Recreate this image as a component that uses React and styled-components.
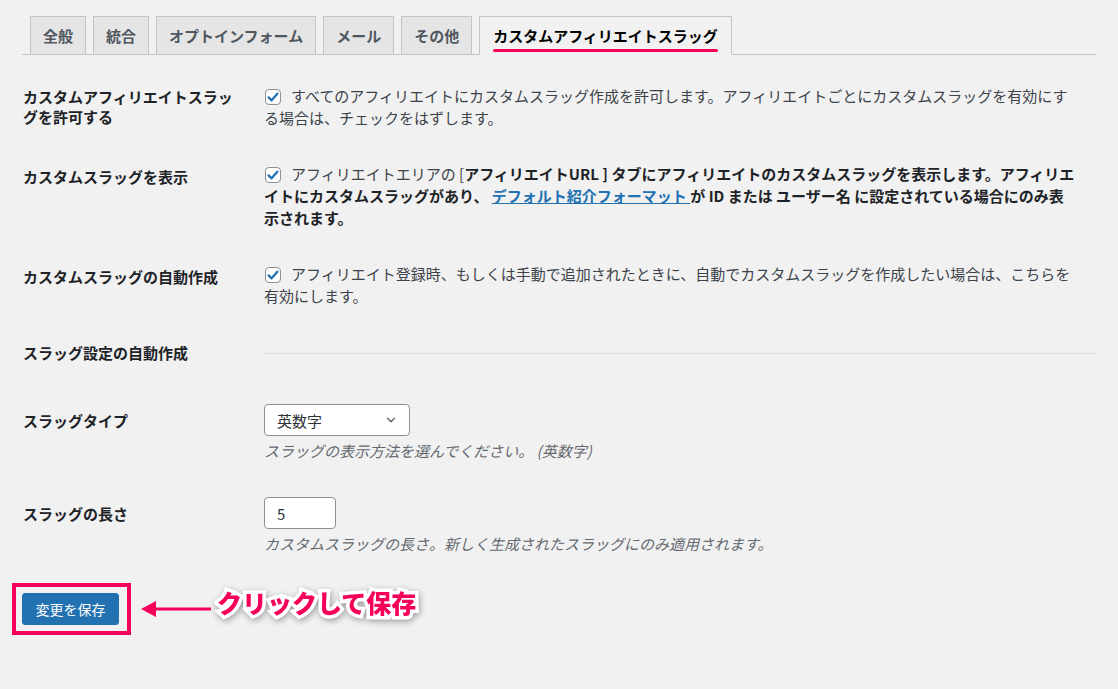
import React from 'react';
import styled, { createGlobalStyle } from 'styled-components';
import { ChevronDown } from 'lucide-react';

const GlobalStyle = createGlobalStyle`
  html, body {
    margin: 0;
    background: #f1f1f1;
  }
  body {
    font-family: "Noto Sans CJK JP", "Noto Sans", sans-serif;
    font-size: 15px;
    color: #3c434a;
  }
`;

const Wrap = styled.div`
  padding: 16px 22px 40px;
`;

const TabBar = styled.nav`
  display: flex;
  gap: 7px;
  padding-left: 8px;
  border-bottom: 1px solid #c3c4c7;
`;

const Tab = styled.div`
  position: relative;
  box-sizing: border-box;
  height: 39px;
  margin-bottom: -1px;
  display: flex;
  align-items: center;
  padding: 0 12px;
  border: 1px solid #c3c4c7;
  border-bottom-color: ${p => (p.$active ? '#f1f1f1' : '#c3c4c7')};
  background: ${p => (p.$active ? '#f1f1f1' : '#e5e5e5')};
  color: ${p => (p.$active ? '#000' : '#50575e')};
  font-weight: 700;
  font-size: 15px;
  line-height: 1;

  ${p => p.$active && `
    padding: 0 13px;
    &::after {
      content: '';
      position: absolute;
      left: 13px;
      right: 13px;
      bottom: 2px;
      height: 3px;
      border-radius: 2px;
      background: #f5005a;
    }
  `}
`;

const FormTable = styled.div`
  margin-top: 13px;
`;

const Row = styled.div`
  display: grid;
  grid-template-columns: 242px 1fr;
`;

const Th = styled.div`
  padding: ${p => p.$pt ?? 19}px 22px ${p => p.$pb ?? 17}px 1px;
  font-weight: 700;
  color: #1d2327;
  line-height: 20px;
`;

const Td = styled.div`
  padding: ${p => p.$pt ?? 17}px 20px ${p => p.$pb ?? 17}px 0;
  line-height: 22px;
  ${p => p.$divider && `
    padding: 0;
    display: flex;
    align-items: center;
    margin-top: -10px;
  `}
`;

const Divider = styled.div`
  flex: 1;
  height: 1px;
  background: #dcdcde;
`;

const Checkbox = styled.span`
  display: inline-flex;
  align-items: center;
  justify-content: center;
  box-sizing: border-box;
  width: 16px;
  height: 16px;
  margin: 0 10px 0 1px;
  vertical-align: -2px;
  border: 1px solid #8c8f94;
  border-radius: 4px;
  background: #fff;
`;

const Strong = styled.strong`
  font-weight: 700;
  color: #1d2327;
`;

const Link = styled.a`
  color: #2271b1;
  text-decoration: underline;
  font-weight: 700;
`;

const SelectBox = styled.div`
  box-sizing: border-box;
  width: 146px;
  height: 32px;
  display: flex;
  align-items: center;
  justify-content: space-between;
  padding: 0 11px 0 12px;
  border: 1px solid #8c8f94;
  border-radius: 4px;
  background: #fff;
  color: #2c3338;
  line-height: 1;
`;

const NumberInput = styled.input`
  box-sizing: border-box;
  display: block;
  width: 72px;
  height: 32px;
  padding: 0 12px;
  border: 1px solid #8c8f94;
  border-radius: 4px;
  background: #fff;
  color: #2c3338;
  font: inherit;
  outline: none;
`;

const Description = styled.p`
  margin: 5px 0 0;
  font-style: italic;
  color: #646970;
  line-height: 20px;
`;

const SubmitRow = styled.div`
  display: flex;
  align-items: center;
  margin: 5px 0 0 -10px;
`;

const Highlight = styled.div`
  border: 4px solid #f5005a;
  padding: 6px 8px 6px 6px;
`;

const SaveButton = styled.button`
  display: block;
  box-sizing: border-box;
  width: 97px;
  height: 32px;
  border: 1px solid #2271b1;
  border-radius: 3px;
  background: #2271b1;
  color: #fff;
  font-family: inherit;
  font-size: 14px;
  cursor: pointer;
`;

const Arrow = styled.svg`
  margin-left: 10px;
  flex: none;
`;

const Callout = styled.span`
  margin-left: 6px;
  padding-bottom: 14px;
  font-size: 25px;
  font-weight: 900;
  color: #f5005a;
  -webkit-text-stroke: 7px #fff;
  paint-order: stroke fill;
  filter: drop-shadow(1px 2px 3px rgba(0, 0, 0, 0.35));
`;

const CheckMark = () => (
  <svg width="14" height="14" viewBox="0 0 16 16">
    <path d="M3 8.4 L6.4 11.8 L13 4.2" fill="none" stroke="#2271b1" strokeWidth="2.6" strokeLinecap="round" strokeLinejoin="round" />
  </svg>
);

const tabs = ['全般', '統合', 'オプトインフォーム', 'メール', 'その他', 'カスタムアフィリエイトスラッグ'];

export default function App() {
  return (
    <Wrap>
      <GlobalStyle />
      <TabBar>
        {tabs.map((t, i) => (
          <Tab key={t} $active={i === tabs.length - 1}>{t}</Tab>
        ))}
      </TabBar>

      <FormTable>
        <Row>
          <Th>カスタムアフィリエイトスラッグを許可する</Th>
          <Td>
            <Checkbox><CheckMark /></Checkbox>
            すべてのアフィリエイトにカスタムスラッグ作成を許可します。アフィリエイトごとにカスタムスラッグを有効にする場合は、チェックをはずします。
          </Td>
        </Row>

        <Row>
          <Th $pt={21}>カスタムスラッグを表示</Th>
          <Td>
            <Checkbox><CheckMark /></Checkbox>
            アフィリエイトエリアの [
            <Strong>アフィリエイトURL ] タブにアフィリエイトのカスタムスラッグを表示します。アフィリエイトにカスタムスラッグがあり、 </Strong>
            <Link href="#">デフォルト紹介フォーマット </Link>
            <Strong> が ID または ユーザー名 に設定されている場合にのみ表示されます。</Strong>
          </Td>
        </Row>

        <Row>
          <Th $pt={21}>カスタムスラッグの自動作成</Th>
          <Td>
            <Checkbox><CheckMark /></Checkbox>
            アフィリエイト登録時、もしくは手動で追加されたときに、自動でカスタムスラッグを作成したい場合は、こちらを有効にします。
          </Td>
        </Row>

        <Row>
          <Th $pb={29}>スラッグ設定の自動作成</Th>
          <Td $divider>
            <Divider />
          </Td>
        </Row>

        <Row>
          <Th>スラッグタイプ</Th>
          <Td $pt={12} $pb={24}>
            <SelectBox>
              英数字
              <ChevronDown size={14} strokeWidth={2} color="#50575e" />
            </SelectBox>
            <Description>スラッグの表示方法を選んでください。 (英数字)</Description>
          </Td>
        </Row>

        <Row>
          <Th>スラッグの長さ</Th>
          <Td $pt={12} $pb={24}>
            <NumberInput type="text" defaultValue="5" />
            <Description>カスタムスラッグの長さ。新しく生成されたスラッグにのみ適用されます。</Description>
          </Td>
        </Row>
      </FormTable>

      <SubmitRow>
        <Highlight>
          <SaveButton type="button">変更を保存</SaveButton>
        </Highlight>
        <Arrow width="70" height="18" viewBox="0 0 70 18">
          <polygon points="0,9 15,1 15,17" fill="#f5005a" />
          <line x1="12" y1="9" x2="70" y2="9" stroke="#f5005a" strokeWidth="3.2" />
        </Arrow>
        <Callout>クリックして保存</Callout>
      </SubmitRow>
    </Wrap>
  );
}
